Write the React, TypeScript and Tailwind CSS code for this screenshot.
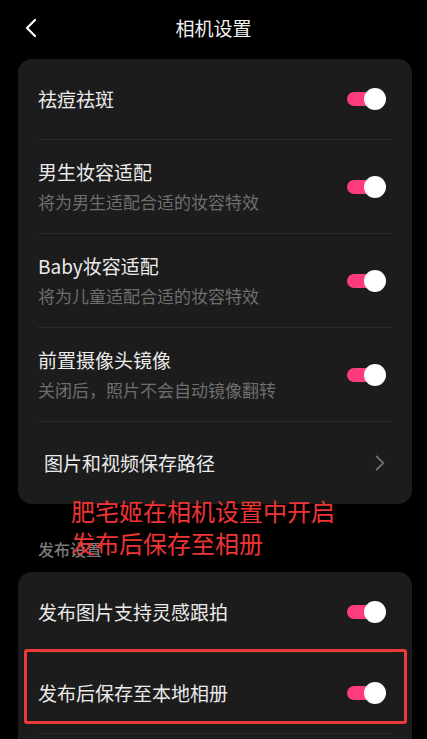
import { ChevronLeft, ChevronRight } from "lucide-react";

function Toggle() {
  return (
    <div className="relative w-[39px] h-[22px] mr-[6px] shrink-0">
      <span className="absolute left-0 top-[4px] h-[14px] w-[32px] rounded-full bg-[#fd3c7c]" />
      <span className="absolute right-0 top-0 h-[22px] w-[22px] rounded-full bg-white" />
    </div>
  );
}

function Row({ title, sub, last }: { title: string; sub?: string; last?: boolean }) {
  return (
    <div
      className={`flex items-center justify-between ${sub ? "h-[94px]" : "h-[81px]"} ${
        last ? "" : "border-b border-[#2c2c2c]"
      }`}
    >
      <div className="flex flex-col">
        <span className="text-[19px] leading-[26px] text-[#ebebeb]">{title}</span>
        {sub && <span className="mt-[5px] text-[17px] leading-[24px] text-[#6e6e6e]">{sub}</span>}
      </div>
      <Toggle />
    </div>
  );
}

export default function App() {
  return (
    <div className="relative min-h-screen bg-black font-['Noto_Sans_CJK_SC',sans-serif]">
      <header className="grid h-[56px] grid-cols-[60px_1fr_60px] items-center">
        <ChevronLeft className="ml-[15px] text-white" size={32} strokeWidth={1.6} />
        <h1 className="text-center text-[19px] text-[#f2f2f2]">相机设置</h1>
        <span />
      </header>

      <section className="ml-[18px] mr-[15px] mt-[3px] rounded-[14px] bg-[#1c1c1c] px-[20px]">
        <Row title="祛痘祛斑" />
        <Row title="男生妆容适配" sub="将为男生适配合适的妆容特效" />
        <Row title="Baby妆容适配" sub="将为儿童适配合适的妆容特效" />
        <Row title="前置摄像头镜像" sub="关闭后，照片不会自动镜像翻转" />
        <div className="flex h-[82px] items-center justify-between pl-[6px]">
          <span className="text-[19px] text-[#ebebeb]">图片和视频保存路径</span>
          <ChevronRight className="-mr-[1px] text-[#6c6c6c]" size={26} strokeWidth={1.7} />
        </div>
      </section>

      <div className="mt-[35px] mb-[13px] pl-[38px] text-[16px] leading-[20px] font-medium text-[#7a7a7a]">
        发布设置
      </div>

      <section className="relative ml-[18px] mr-[15px] rounded-[14px] bg-[#1c1c1c] px-[20px] pb-[30px]">
        <Row title="发布图片支持灵感跟拍" />
        <Row title="发布后保存至本地相册" />
        <div className="pointer-events-none absolute left-[6px] top-[77px] h-[75px] w-[383px] rounded-[3px] border-[3px] border-[#f03a3a]" />
      </section>

      <div className="pointer-events-none absolute left-[71px] top-[495px] text-[24px] leading-[32px] text-[#ef3434]">
        <div>肥宅姬在相机设置中开启</div>
        <div>发布后保存至相册</div>
      </div>
    </div>
  );
}
